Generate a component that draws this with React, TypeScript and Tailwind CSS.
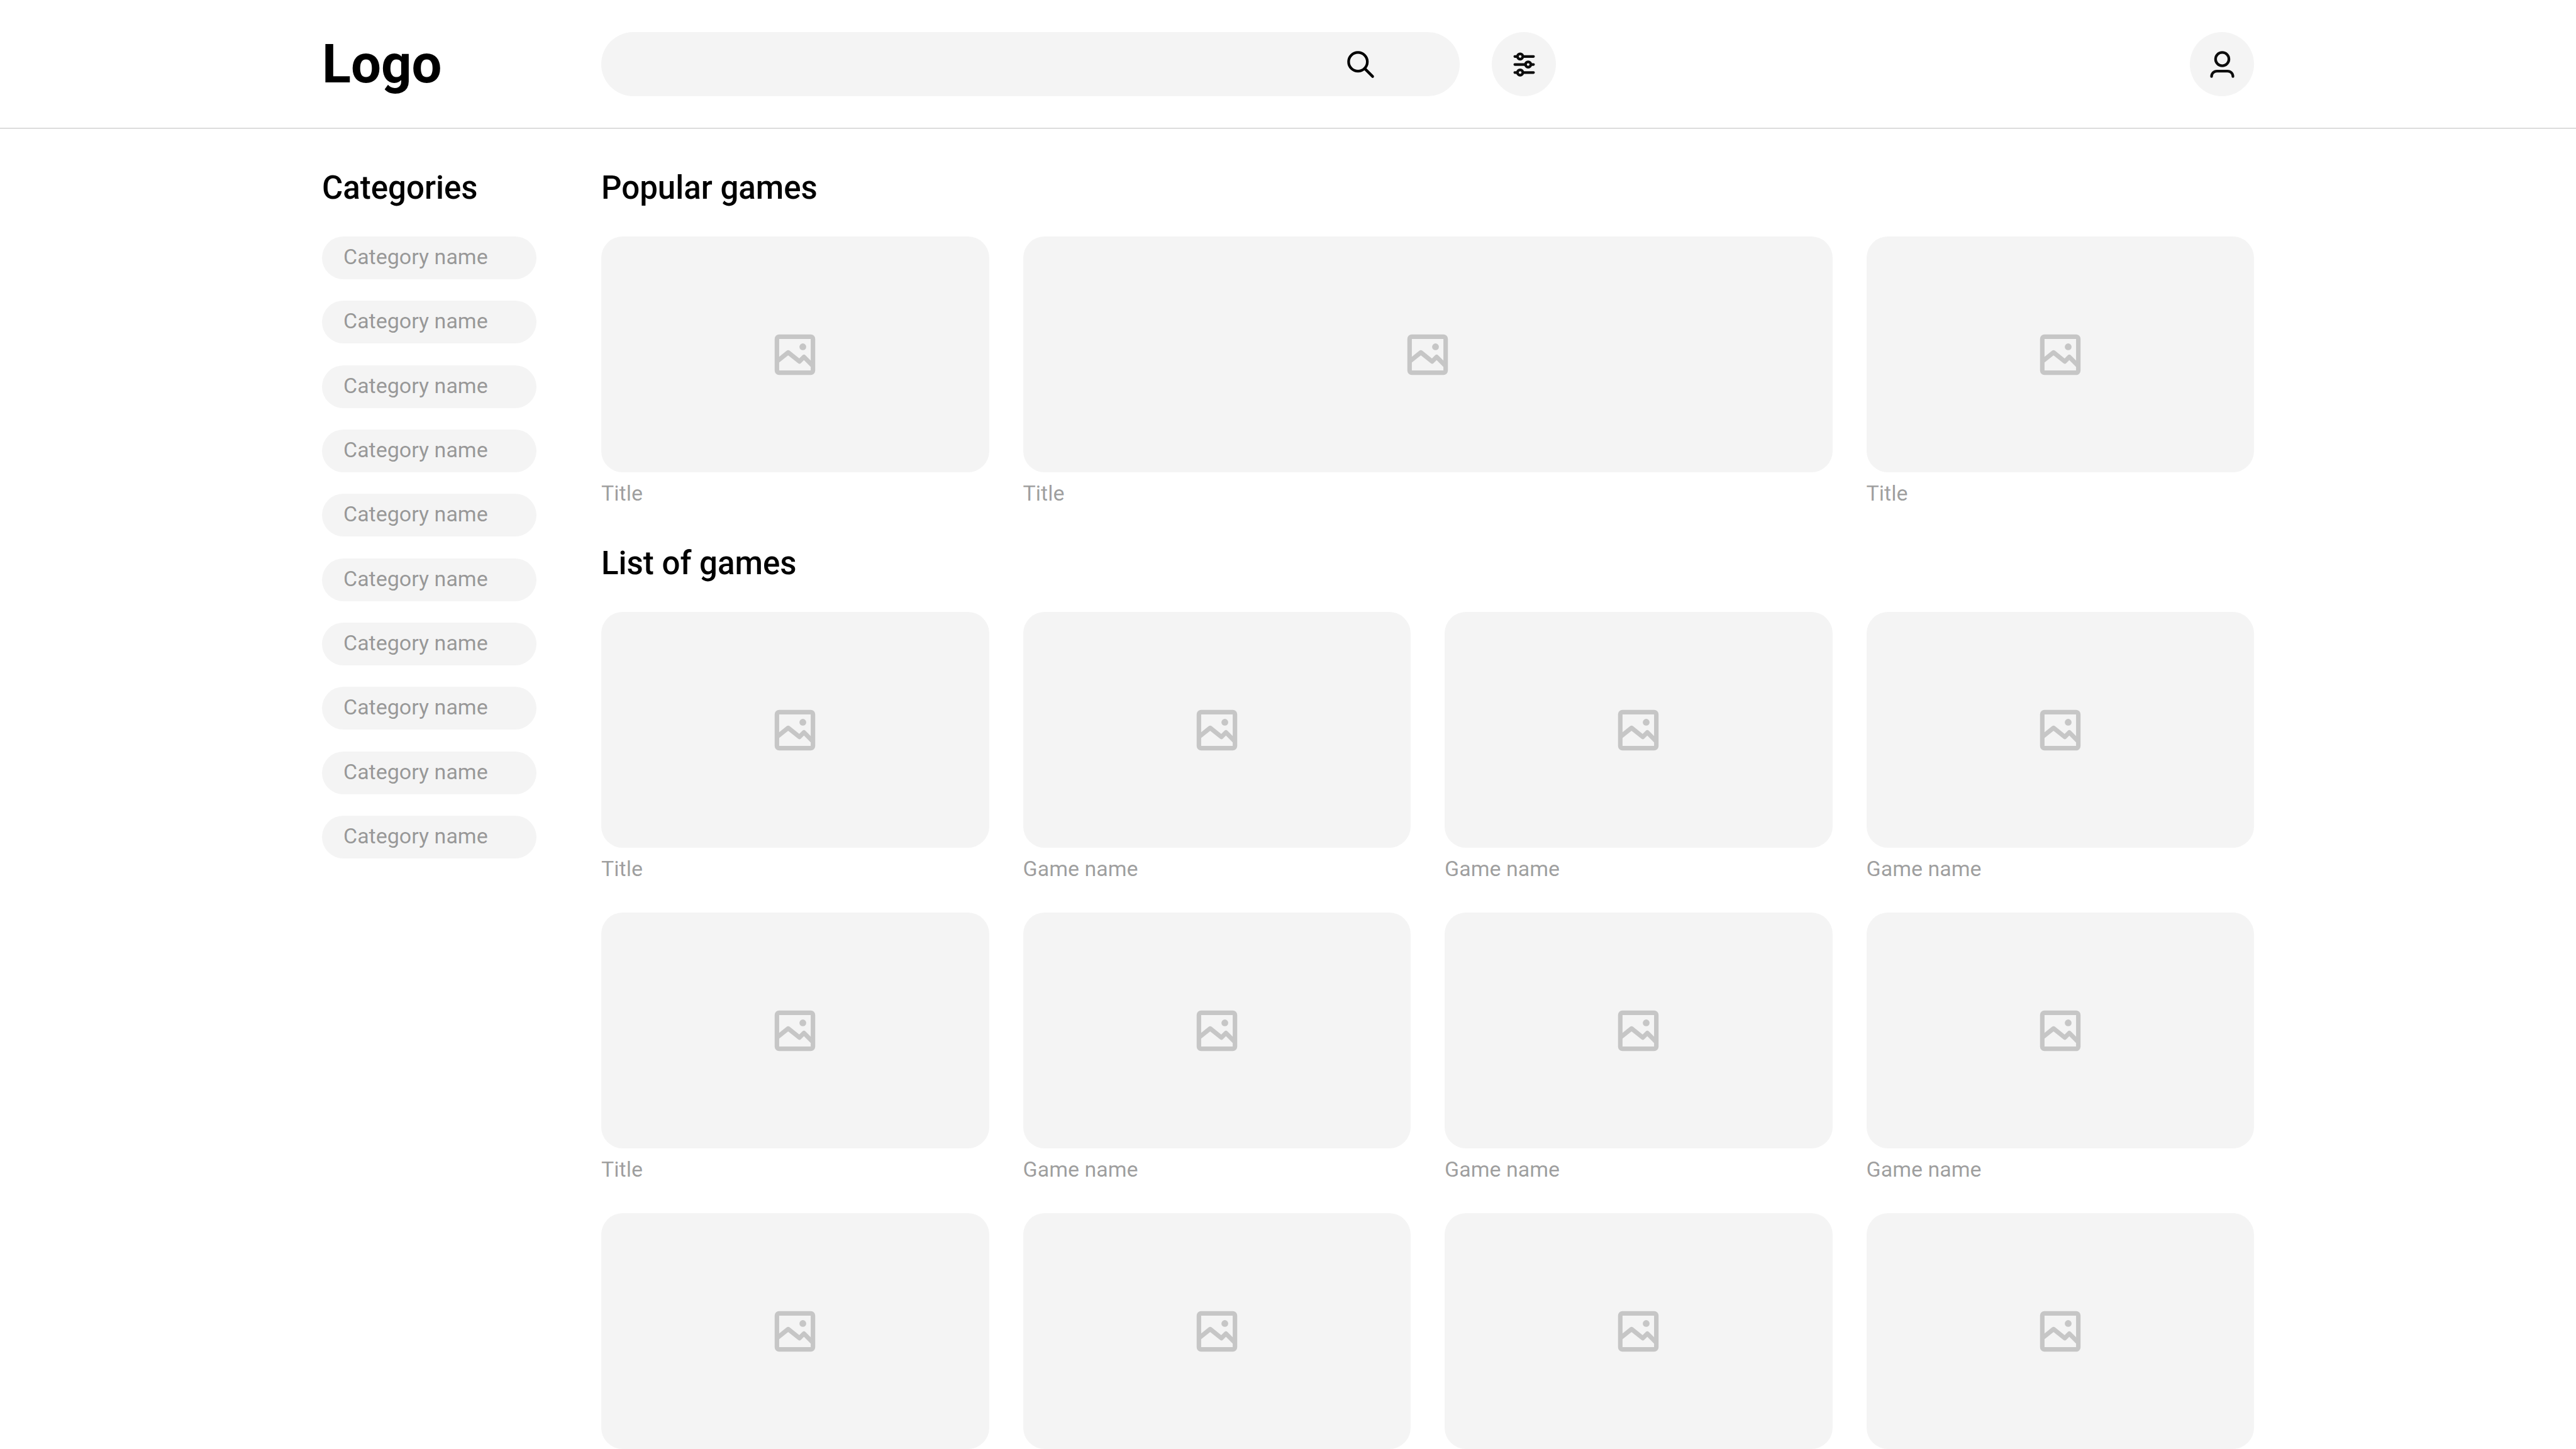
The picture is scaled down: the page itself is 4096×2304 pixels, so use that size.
import type { ReactNode } from "react";

const categories = Array.from({ length: 10 }, () => "Category name");

const popular = [
  { title: "Title", wide: false },
  { title: "Title", wide: true },
  { title: "Title", wide: false },
];

const games = [
  "Title", "Game name", "Game name", "Game name",
  "Title", "Game name", "Game name", "Game name",
  "", "", "", "",
];

function SearchIcon() {
  return (
    <svg viewBox="0 0 24 24" className="size-[51px]" fill="none" stroke="#000" strokeWidth="2" strokeLinecap="round" aria-hidden="true">
      <circle cx="10" cy="10" r="7" />
      <path d="M15 15l6 6" />
    </svg>
  );
}

function FilterIcon() {
  return (
    <svg viewBox="0 0 24 24" className="size-[51px]" fill="#f4f4f4" stroke="#0d0d0d" strokeWidth="2" strokeLinecap="round" aria-hidden="true">
      <path d="M5 6h14M5 12h14M5 18h14" />
      <circle cx="9" cy="6" r="2" />
      <circle cx="15" cy="12" r="2" />
      <circle cx="9" cy="18" r="2" />
    </svg>
  );
}

function UserIcon() {
  return (
    <svg viewBox="0 0 24 24" className="size-[51px]" fill="none" stroke="#0d0d0d" strokeWidth="2" strokeLinecap="round" aria-hidden="true">
      <circle cx="12" cy="8" r="5" />
      <path d="M4 21a4 4 0 0 1 4-4h8a4 4 0 0 1 4 4" />
    </svg>
  );
}

function ImageIcon() {
  return (
    <svg viewBox="0 0 24 24" className="size-[86px]" aria-hidden="true">
      <path
        fill="#c6c6c6"
        fillRule="evenodd"
        d="M5 3h14a2 2 0 0 1 2 2v14a2 2 0 0 1-2 2H5a2 2 0 0 1-2-2V5a2 2 0 0 1 2-2zM5 5v14h14V5z"
      />
      <path d="M4 15l5-4 5 4 2-2 4 4" fill="none" stroke="#c6c6c6" strokeWidth="2" strokeLinejoin="round" />
      <circle cx="15.5" cy="8.5" r="1.5" fill="#c6c6c6" />
    </svg>
  );
}

function RoundButton({ label, children }: { label: string; children: ReactNode }) {
  return (
    <button type="button" aria-label={label} className="flex size-[102px] shrink-0 items-center justify-center rounded-full bg-[#f4f4f4]">
      {children}
    </button>
  );
}

function Heading({ children }: { children: ReactNode }) {
  return <h2 className="mb-[45px] text-[51px] leading-[64px] font-medium">{children}</h2>;
}

function GameCard({ title, wide = false }: { title: string; wide?: boolean }) {
  return (
    <figure className={wide ? "col-span-2" : ""}>
      <div className="flex h-[375px] items-center justify-center rounded-[34px] bg-[#f4f4f4]">
        <ImageIcon />
      </div>
      {title && <figcaption className="mt-[8px] text-[34px] leading-[50px] text-black/40">{title}</figcaption>}
    </figure>
  );
}

export default function App() {
  return (
    <div className="bg-white font-['Roboto',sans-serif] text-black">
      <header className="border-b-2 border-[#dcdcdc] px-[12.5%] pt-[51px] pb-[50px]">
        <div className="flex items-center gap-[103px]">
          <a href="#" className="w-[341px] shrink-0 text-[85px] leading-[102px] font-bold">
            Logo
          </a>
          <div className="flex min-w-0 flex-1 items-center gap-[51px]">
            <form role="search" className="flex h-[102px] max-w-[1365px] flex-1 items-center rounded-full bg-[#f4f4f4] pr-[132px] pl-[51px]">
              <input type="search" aria-label="Search games" className="h-full min-w-0 flex-1 bg-transparent text-[34px] outline-none" />
              <button type="button" aria-label="Search">
                <SearchIcon />
              </button>
            </form>
            <RoundButton label="Filters">
              <FilterIcon />
            </RoundButton>
            <div className="ml-auto">
              <RoundButton label="Profile">
                <UserIcon />
              </RoundButton>
            </div>
          </div>
        </div>
      </header>

      <div className="flex items-start gap-[103px] px-[12.5%] pt-[62px]">
        <nav aria-label="Categories" className="w-[341px] shrink-0">
          <Heading>Categories</Heading>
          <ul className="flex min-h-[989px] flex-col justify-between">
            {categories.map((name, i) => (
              <li key={i}>
                <a href="#" className="block rounded-full bg-[#f4f4f4] px-[34px] pt-[7px] pb-[11px] text-[34px] leading-[50px] text-black/40">
                  {name}
                </a>
              </li>
            ))}
          </ul>
        </nav>

        <main className="flex min-w-0 flex-1 flex-col gap-[55px]">
          <section>
            <Heading>Popular games</Heading>
            <div className="grid grid-cols-4 gap-x-[54px] gap-y-[45px]">
              {popular.map((game, i) => (
                <GameCard key={i} title={game.title} wide={game.wide} />
              ))}
            </div>
          </section>
          <section>
            <Heading>List of games</Heading>
            <div className="grid grid-cols-4 gap-x-[54px] gap-y-[45px]">
              {games.map((title, i) => (
                <GameCard key={i} title={title} />
              ))}
            </div>
          </section>
        </main>
      </div>
    </div>
  );
}
